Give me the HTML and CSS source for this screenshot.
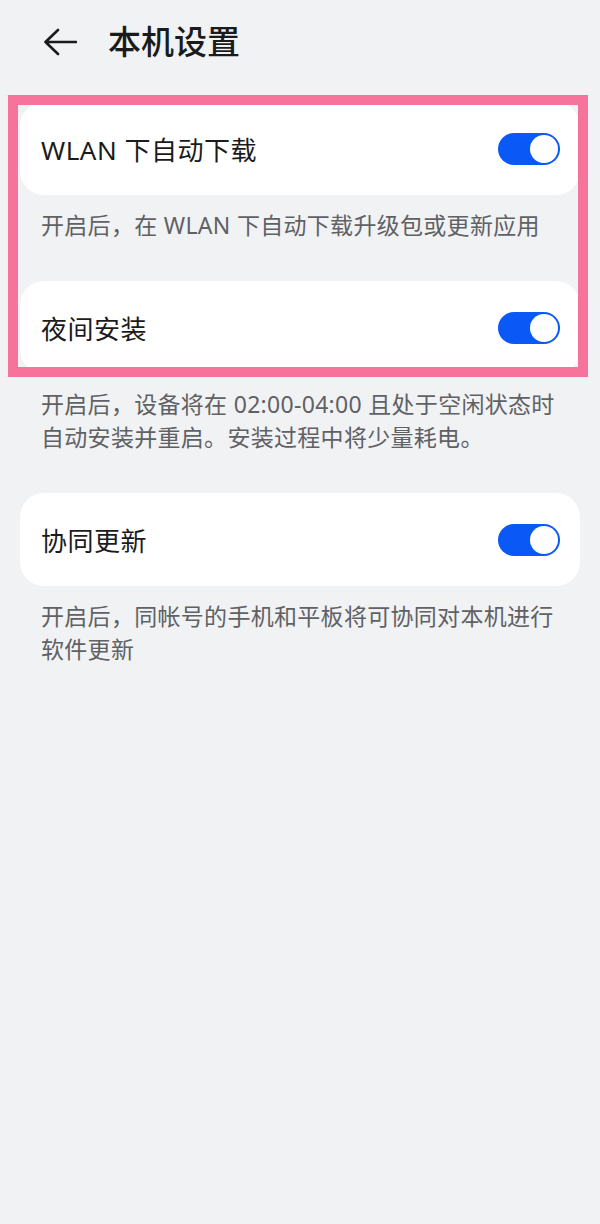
FILE: index.html
```html
<!DOCTYPE html>
<html lang="zh-CN">
<head>
<meta charset="UTF-8">
<meta name="viewport" content="width=device-width, initial-scale=1.0">
<title>本机设置</title>
<link rel="stylesheet" href="styles.css">
</head>
<body>
<div class="page">
  <header class="topbar">
    <svg class="back" width="34" height="28" viewBox="0 0 34 28">
      <path d="M2.5 14H33M15 2L2.5 14L15 26" fill="none" stroke="#1b1b1b" stroke-width="2.6" stroke-linecap="round" stroke-linejoin="round"/>
    </svg>
    <h1>本机设置</h1>
  </header>

  <div class="settings">
    <div class="card">
      <span class="label">WLAN 下自动下载</span>
      <span class="switch"></span>
    </div>
    <p class="hint">开启后，在 WLAN 下自动下载升级包或更新应用</p>

    <div class="card">
      <span class="label">夜间安装</span>
      <span class="switch"></span>
    </div>
    <p class="hint">开启后，设备将在 02:00-04:00 且处于空闲状态时<br>自动安装并重启。安装过程中将少量耗电。</p>

    <div class="card">
      <span class="label">协同更新</span>
      <span class="switch"></span>
    </div>
    <p class="hint">开启后，同帐号的手机和平板将可协同对本机进行<br>软件更新</p>
  </div>

  <div class="highlight"></div>
</div>
</body>
</html>
```

FILE: styles.css
```css
body {
  margin: 0;
  padding: 0;
  background-color: #f1f2f4;
  font-family: "Noto Sans", "Noto Sans CJK SC", sans-serif;
  color: #1b1b1b;
}
.page {
  position: relative;
  width: 600px;
  min-height: 1224px;
}
.topbar {
  display: flex;
  align-items: center;
  height: 84px;
  padding-left: 43px;
}
.back {
  display: block;
  margin-right: 31px;
}
h1 {
  margin: 0;
  font-size: 33px;
  font-weight: 500;
  line-height: 40px;
}
.settings {
  padding: 18px 20px 0;
}
.card {
  display: flex;
  align-items: center;
  justify-content: space-between;
  height: 93px;
  padding: 0 20px 0 21px;
  background-color: #fff;
  border-radius: 24px;
}
.label {
  font-size: 26px;
  font-weight: 400;
  letter-spacing: 0.5px;
}
.switch {
  position: relative;
  width: 62px;
  height: 32px;
  border-radius: 16px;
  background-color: #0a59f7;
}
.switch::after {
  content: "";
  position: absolute;
  top: 2px;
  right: 2px;
  width: 28px;
  height: 28px;
  border-radius: 50%;
  background-color: #fff;
}
.hint {
  margin: 0 0 39px;
  padding: 14px 0 0 21px;
  font-size: 23px;
  line-height: 33px;
  letter-spacing: 0.3px;
  color: #606164;
}
.highlight {
  position: absolute;
  left: 8px;
  top: 95px;
  width: 560px;
  height: 262px;
  border: 10px solid #f6739b;
}
```
